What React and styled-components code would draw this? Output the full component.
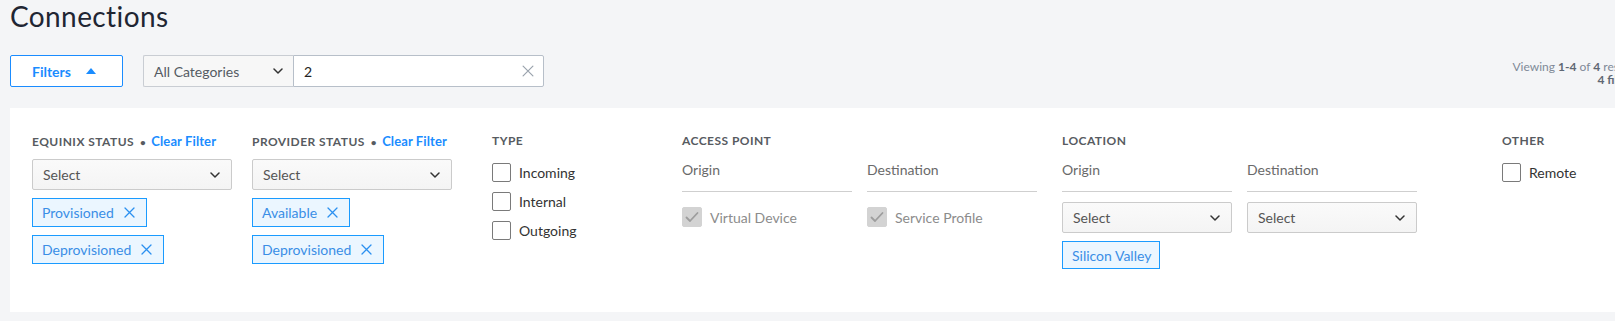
import React from "react";
import styled, { createGlobalStyle } from "styled-components";

const GlobalStyle = createGlobalStyle`
  html, body { margin: 0; padding: 0; }
  body {
    background: #f4f5f7;
    font-family: Lato, "Open Sans", Arial, sans-serif;
    overflow: hidden;
    width: 1615px;
    height: 321px;
  }
  * { box-sizing: border-box; }
`;

const Page = styled.div`
  width: 1638px;
  padding-left: 10px;
`;

const Title = styled.h1`
  margin: 0;
  padding-top: 1px;
  font-size: 28px;
  line-height: 30px;
  font-weight: 400;
  color: #1f2633;
  letter-spacing: 0.4px;
`;

const Toolbar = styled.div`
  display: flex;
  align-items: flex-start;
  margin-top: 24px;
  height: 32px;
`;

const FilterButton = styled.button`
  width: 113px;
  height: 32px;
  display: flex;
  align-items: center;
  justify-content: flex-start;
  gap: 15px;
  background: #fff;
  border: 1px solid #1a8cff;
  border-radius: 2px;
  color: #1a8cff;
  font-family: inherit;
  font-size: 14px;
  font-weight: 700;
  padding: 0 0 0 21px;
`;

const SearchGroup = styled.div`
  display: flex;
  margin-left: 20px;
`;

const CategorySelect = styled.div`
  width: 150px;
  height: 32px;
  display: flex;
  align-items: center;
  justify-content: space-between;
  padding: 0 10px 0 10px;
  background: #f7f7f7;
  border: 1px solid #c9cdd3;
  border-right: none;
  border-radius: 2px 0 0 2px;
  color: #555b63;
  font-size: 14px;
`;

const SearchInput = styled.div`
  width: 251px;
  height: 32px;
  display: flex;
  align-items: center;
  justify-content: space-between;
  padding: 0 9px 0 10px;
  background: #fff;
  border: 1px solid #b7bfc9;
  border-radius: 0 2px 2px 0;
  color: #222;
  font-size: 14px;
`;

const Results = styled.div`
  margin-left: auto;
  margin-top: 5px;
  text-align: right;
  font-size: 12px;
  line-height: 13px;
  color: #808a98;
  white-space: nowrap;
  b { color: #5f6773; font-weight: 700; }
`;

const Panel = styled.div`
  margin-top: 21px;
  height: 204px;
  background: #fff;
  padding: 26px 0 0 22px;
  display: grid;
  grid-template-columns: 220px 240px 190px 380px 440px auto;
  align-items: start;
`;

const Column = styled.div`
  display: flex;
  flex-direction: column;
`;

const Header = styled.div`
  font-size: 12px;
  line-height: 14px;
  height: 14px;
  font-weight: 700;
  color: #575b61;
  text-transform: uppercase;
  white-space: nowrap;
  letter-spacing: 0.45px;
`;

const Dot = styled.span`
  margin: 0 5px 0 6px;
  font-size: 10px;
`;

const ClearLink = styled.span`
  color: #1a8cff;
  text-transform: none;
  font-size: 13px;
  letter-spacing: 0.1px;
`;

const Select = styled.div`
  width: ${(p) => p.$width || 200}px;
  height: 31px;
  margin-top: ${(p) => p.$mt || 11}px;
  display: flex;
  align-items: center;
  justify-content: space-between;
  padding: 0 11px 0 10px;
  background: linear-gradient(#fafafa, #f4f4f4);
  border: 1px solid #cbcbcb;
  border-radius: 2px;
  color: #555;
  font-size: 14px;
`;

const TagList = styled.div`
  display: flex;
  flex-direction: column;
  align-items: flex-start;
  gap: 8px;
  margin-top: 8px;
`;

const Tag = styled.div`
  height: ${(p) => (p.$plain ? 28 : 29)}px;
  display: inline-flex;
  align-items: center;
  gap: 10px;
  padding: 0 ${(p) => (p.$plain ? 8 : 11)}px 0 9px;
  background: #ebf6ff;
  border: 1px solid #1a9bff;
  color: #3a8ee6;
  font-size: 14px;
  white-space: nowrap;
`;

const CheckList = styled.div`
  display: flex;
  flex-direction: column;
  gap: 10px;
  margin-top: ${(p) => p.$mt ?? 15}px;
`;

const CheckRow = styled.label`
  display: flex;
  align-items: center;
  gap: 8px;
  font-size: 14px;
  color: ${(p) => (p.$disabled ? "#8c8c8c" : "#333")};
  white-space: nowrap;
`;

const Box = styled.span`
  width: ${(p) => (p.$disabled ? 20 : 19)}px;
  height: ${(p) => (p.$disabled ? 20 : 19)}px;
  flex: none;
  display: flex;
  align-items: center;
  justify-content: center;
  border: 1px solid ${(p) => (p.$disabled ? "#d3d3d3" : "#7a7a7a")};
  background: ${(p) => (p.$disabled ? "#d3d3d3" : "#fff")};
  border-radius: 2px;
`;

const SubGrid = styled.div`
  display: grid;
  grid-template-columns: 170px 170px;
  column-gap: 15px;
`;

const SubColumn = styled.div`
  display: flex;
  flex-direction: column;
  align-items: flex-start;
`;

const SubLabel = styled.div`
  width: 170px;
  margin-top: 13px;
  font-size: 14px;
  line-height: 18px;
  padding-bottom: 12px;
  border-bottom: 1px solid #cfcfcf;
  color: #6a6a6a;
`;

const Chevron = ({ color = "#333" }) => (
  <svg width="10" height="6" viewBox="0 0 10 6" fill="none">
    <path d="M1 1l4 4 4-4" stroke={color} strokeWidth="1.5" strokeLinecap="round" strokeLinejoin="round" />
  </svg>
);

const UpTriangle = () => (
  <svg width="10" height="6" viewBox="0 0 10 6">
    <polygon points="0,6 5,0 10,6" fill="#1a8cff" />
  </svg>
);

const Cross = ({ color, size = 11, w = 1.3 }) => (
  <svg width={size} height={size} viewBox="0 0 11 11" fill="none">
    <path d="M1 1l9 9M10 1l-9 9" stroke={color} strokeWidth={w} strokeLinecap="round" />
  </svg>
);

const Check = () => (
  <svg width="14" height="12" viewBox="0 0 14 12" fill="none">
    <path d="M1.5 6.5l3.5 3.5 7.5-8" stroke="#9d9d9d" strokeWidth="1.8" strokeLinecap="round" strokeLinejoin="round" />
  </svg>
);

const Checkbox = ({ label, checked, disabled }) => (
  <CheckRow $disabled={disabled}>
    <Box $disabled={disabled}>{checked && <Check />}</Box>
    {label}
  </CheckRow>
);

const StatusColumn = ({ title, tags }) => (
  <Column>
    <Header>
      {title}
      <Dot>•</Dot>
      <ClearLink>Clear Filter</ClearLink>
    </Header>
    <Select>
      Select
      <Chevron />
    </Select>
    <TagList>
      {tags.map((t) => (
        <Tag key={t}>
          {t}
          <Cross color="#2b90f0" />
        </Tag>
      ))}
    </TagList>
  </Column>
);

export default function App() {
  return (
    <>
      <GlobalStyle />
      <Page>
        <Title>Connections</Title>
        <Toolbar>
          <FilterButton>
            Filters
            <UpTriangle />
          </FilterButton>
          <SearchGroup>
            <CategorySelect>
              All Categories
              <Chevron />
            </CategorySelect>
            <SearchInput>
              2
              <Cross color="#9aa3ad" size={12} w={1.1} />
            </SearchInput>
          </SearchGroup>
          <Results>
            Viewing <b>1-4</b> of <b>4</b> results
            <br />
            <b>4 filters</b>
          </Results>
        </Toolbar>
        <Panel>
          <StatusColumn title="Equinix Status" tags={["Provisioned", "Deprovisioned"]} />
          <StatusColumn title="Provider Status" tags={["Available", "Deprovisioned"]} />
          <Column>
            <Header>Type</Header>
            <CheckList>
              <Checkbox label="Incoming" />
              <Checkbox label="Internal" />
              <Checkbox label="Outgoing" />
            </CheckList>
          </Column>
          <Column>
            <Header>Access Point</Header>
            <SubGrid>
              <SubColumn>
                <SubLabel>Origin</SubLabel>
                <CheckList $mt={15}>
                  <Checkbox label="Virtual Device" checked disabled />
                </CheckList>
              </SubColumn>
              <SubColumn>
                <SubLabel>Destination</SubLabel>
                <CheckList $mt={15}>
                  <Checkbox label="Service Profile" checked disabled />
                </CheckList>
              </SubColumn>
            </SubGrid>
          </Column>
          <Column>
            <Header>Location</Header>
            <SubGrid>
              <SubColumn>
                <SubLabel>Origin</SubLabel>
                <Select $width={170} $mt={10}>
                  Select
                  <Chevron />
                </Select>
                <TagList>
                  <Tag $plain>Silicon Valley</Tag>
                </TagList>
              </SubColumn>
              <SubColumn>
                <SubLabel>Destination</SubLabel>
                <Select $width={170} $mt={10}>
                  Select
                  <Chevron />
                </Select>
              </SubColumn>
            </SubGrid>
          </Column>
          <Column>
            <Header>Other</Header>
            <CheckList>
              <Checkbox label="Remote" />
            </CheckList>
          </Column>
        </Panel>
      </Page>
    </>
  );
}
